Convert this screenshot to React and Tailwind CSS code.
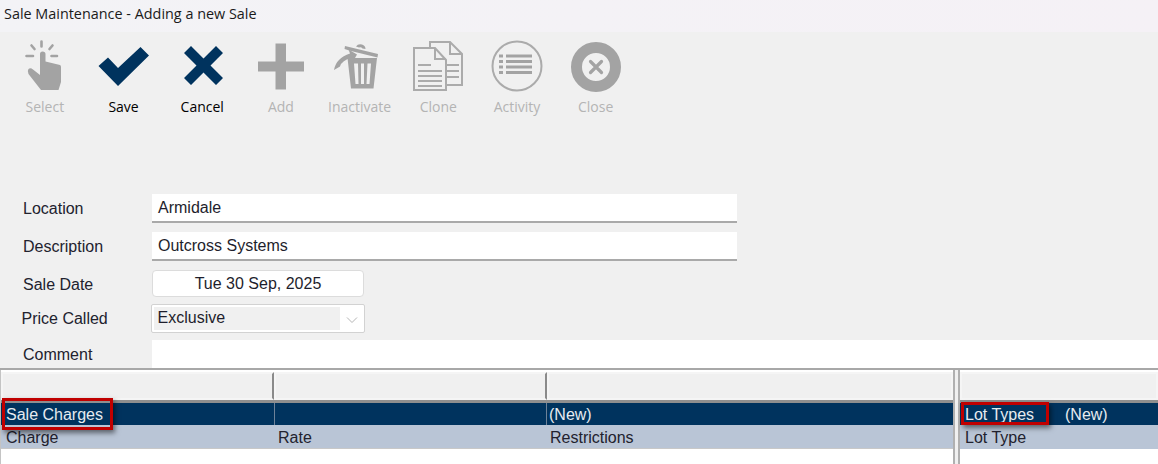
import React from "react";

const G = "#a3a3a3";
const N = "#00335e";

function Icon({ box, children }) {
  return (
    <svg width="60" height="56" viewBox={box} className="block shrink-0">
      {children}
    </svg>
  );
}

const tools = [
  {
    label: "Select",
    on: false,
    icon: (
      <Icon box="15 38 60 56">
        <g stroke={G} strokeWidth="2.6" strokeLinecap="round" fill="none">
          <path d="M42.5 41.5V46.5M32.5 45.5L35.5 49M53.5 45.5L50.5 49M27.5 56H34M52.5 56H58" />
        </g>
        <path
          fill={G}
          d="M41 54Q41 51.5 43.5 51.5Q46.5 51.5 46.5 54V61.5L61 65Q62 65.5 62 67V82L59.5 90H42L29.5 74Q28 71 29.5 69Q31.5 67.5 34 69.5L41 75Z"
        />
      </Icon>
    ),
  },
  {
    label: "Save",
    on: true,
    icon: (
      <Icon box="93 38 60 56">
        <path fill={N} d="M98.5 66L108 57.5L118 68L140.5 47L149 55.5L118 86Z" />
      </Icon>
    ),
  },
  {
    label: "Cancel",
    on: true,
    icon: (
      <Icon box="171 38 60 56">
        <path fill={N} d="M190 46L202.5 58.5L215 46L222 53L209.500 65.500L222 78L215 85L202.500 72.500L190 85L183 78L195.500 65.500L183 53Z" />
      </Icon>
    ),
  },
  {
    label: "Add",
    on: false,
    icon: (
      <Icon box="250 38 60 56">
        <path fill={G} d="M275.500 43.500H286V61.500H304V71.500H286V89.500H275.500V71.500H258V61.500H275.500Z" />
      </Icon>
    ),
  },
  {
    label: "Inactivate",
    on: false,
    icon: (
      <Icon box="329 38 60 56">
        <path fill={G} d="M345 46L378 54L377.500 57.500L351 51L344.500 49Z" />
        <path fill={G} d="M356 46.500Q358 43.500 362 44.500Q365.500 45.500 365.500 49L362.500 48.500Q361 46.500 359 47.500Z" />
        <path fill={G} fillRule="evenodd" d="M347.500 58H377L373.500 88.500H351ZM354 63.500L355.500 84H358.500L358 63.500ZM361 63.500V84H364V63.500ZM367.500 63.500L366.500 84H369.500L371 63.500Z" />
        <path fill={G} d="M334 70Q336 58 350 53.500L348.500 49.500L357 54.500L353 61.500L351.500 58Q342 60 340 66.500Z" />
      </Icon>
    ),
  },
  {
    label: "Clone",
    on: false,
    icon: (
      <Icon box="408 38 60 56">
        <g fill="#f0f0f0" stroke="#ababab" strokeWidth="2">
          <path d="M430 42H450L462 54V85H430Z" />
          <path d="M450 42V54H462" fill="none" />
          <path d="M414 48H435L446 60V90H414Z" />
          <path d="M435 48V59H446" fill="none" />
        </g>
        <path stroke="#ababab" strokeWidth="2" fill="none" d="M418 65H431M418 71H442M418 76H442M418 81H442M418 86H442M447 65H459M447 71H459M447 77H459" />
      </Icon>
    ),
  },
  {
    label: "Activity",
    on: false,
    icon: (
      <Icon box="486 38 60 56">
        <circle cx="517" cy="66" r="24.500" fill="none" stroke="#ababab" strokeWidth="2" />
        <path stroke={G} strokeWidth="2.800" fill="none" d="M506 56H532M506 61.500H532M506 67H532M506 72.500H532M499 56H503M499 61.500H503M499 67H503M499 72.500H503" />
      </Icon>
    ),
  },
  {
    label: "Close",
    on: false,
    icon: (
      <Icon box="565 38 60 56">
        <circle cx="596" cy="67" r="19.500" fill="none" stroke={G} strokeWidth="11" />
        <path stroke={G} strokeWidth="3.200" strokeLinecap="round" d="M590.500 61.500L601.500 72.500M601.500 61.500L590.500 72.500" />
      </Icon>
    ),
  },
];

function Label({ children, className = "" }) {
  return <div className={`w-[129px] shrink-0 text-[16px] text-[#22222e] ${className}`}>{children}</div>;
}

function Field({ children }) {
  return (
    <div className="w-[585px] bg-white border-b-2 border-[#a9a9a9] h-[29px] pl-[6px] leading-[28px] text-[16px] text-[#1e1e2c]">
      {children}
    </div>
  );
}

function HeaderCell({ className = "" }) {
  return <div className={`h-[28px] bg-[#f0f0f0] border-2 border-[#f5f5f5] ${className}`} />;
}

export default function App() {
  return (
    <div className="relative w-[1158px] h-[464px] overflow-hidden bg-[#f0f0f0] font-['Liberation_Sans',Arial,sans-serif]">
      <div className="h-8 bg-gradient-to-r from-[#f3f3f6] to-[#f5f1f6] pl-1 pt-[4px] font-['Open_Sans',sans-serif] text-[14.400px] leading-[20px] text-[#1a1a1a]">
        Sale Maintenance - Adding a new Sale
      </div>

      <div className="flex h-[162px] pl-[5px] pt-[6px]">
        {tools.map((t) => (
          <div key={t.label} className="w-[78.700px] flex flex-col items-center">
            {t.icon}
            <div
              className={`font-['Open_Sans',sans-serif] text-[14px] leading-[20px] mt-[3px] pl-[1px] ${
                t.on ? "text-black font-medium" : "text-[#b4b4b4]"
              }`}
            >
              {t.label}
            </div>
          </div>
        ))}
      </div>

      <div className="pl-[23px] flex flex-col">
        <div className="flex items-center h-[29px]">
          <Label className="pt-[1px]">Location</Label>
          <Field>Armidale</Field>
        </div>
        <div className="flex items-center h-[29px] mt-[9px]">
          <Label>Description</Label>
          <Field>Outcross Systems</Field>
        </div>
        <div className="flex items-center h-[27px] mt-[9px]">
          <Label className="pt-[2px]">Sale Date</Label>
          <div className="w-[212px] h-[27px] rounded-[4px] bg-white border border-[#dcdcdc] text-center leading-[26px] text-[16px] text-[#1e1e2c]">
            Tue 30 Sep, 2025
          </div>
        </div>
        <div className="flex items-center h-[29px] mt-[7px] -ml-[1.500px]">
          <Label className="pt-[1px]">Price Called</Label>
          <div className="w-[214px] h-[29px] rounded-[2px] bg-white border border-[#d2d2d2] flex items-center pl-[2px] pr-[1px] py-[2px]">
            <div className="w-[186px] h-[23px] bg-[#f0f0f0] pl-[4px] leading-[22px] text-[16px] text-[#1e1e2c]">Exclusive</div>
            <svg width="12" height="8" viewBox="0 0 12 8" className="ml-[6px] mt-[2px]">
              <path d="M1 1.500L6 6.500L11 1.500" fill="none" stroke="#b5b5b5" strokeWidth="1" />
            </svg>
          </div>
        </div>
        <div className="flex items-center h-[28px] mt-[7px]">
          <Label className="pt-[1px]">Comment</Label>
          <div className="flex-1 h-[28px] bg-white" />
        </div>
      </div>

      <div className="flex h-[96px] border-t-2 border-[#a8a8a8] text-[16px]">
        <div className="w-[955px] shrink-0 border-l border-[#c4c4c4] border-r-2 border-r-[#b0b0b0] bg-white">
          <div className="flex mt-[2px] border-b-[3px] border-[#8f8f8f] bg-[#f0f0f0]">
            <HeaderCell className="w-[273px] border-r-[#8a8a8a]" />
            <HeaderCell className="w-[273px] border-r-[#8a8a8a]" />
            <HeaderCell className="flex-1" />
          </div>
          <div className="flex h-[22px] leading-[23px] bg-[#00335e] text-[#e6ebf0]">
            <div className="w-[274px] pl-[5px] border-r border-[#6d8299]">Sale Charges</div>
            <div className="w-[272px] border-r border-[#6d8299]" />
            <div className="pl-[2px]">(New)</div>
          </div>
          <div className="flex h-[24px] leading-[26px] bg-[#b9c5d6] text-[#22222e] border-b border-[#c8c8c8]">
            <div className="w-[272px] pl-[5px]">Charge</div>
            <div className="w-[272px] pl-[5px]">Rate</div>
            <div className="pl-[5px]">Restrictions</div>
          </div>
        </div>
        <div className="w-[3px] shrink-0 bg-[#f0f0f0]" />
        <div className="flex-1 border-l-2 border-[#b0b0b0] bg-white">
          <div className="mt-[2px] border-b-[3px] border-[#8f8f8f] bg-[#f0f0f0]">
            <HeaderCell />
          </div>
          <div className="flex h-[22px] leading-[23px] bg-[#00335e] text-[#e6ebf0]">
            <div className="w-[105px] pl-[5px]">Lot Types</div>
            <div>(New)</div>
          </div>
          <div className="h-[24px] leading-[26px] bg-[#b9c5d6] text-[#22222e] pl-[5px]">Lot Type</div>
        </div>
      </div>

      <div className="absolute left-[2px] top-[398px] w-[111px] h-[32px] border-[3px] border-[#c00000] shadow-[2px_3px_5px_rgba(0,0,0,0.5)]" />
      <div className="absolute left-[961px] top-[402px] w-[88px] h-[23px] border-[3px] border-[#c00000] shadow-[2px_3px_5px_rgba(0,0,0,0.5)]" />
    </div>
  );
}
